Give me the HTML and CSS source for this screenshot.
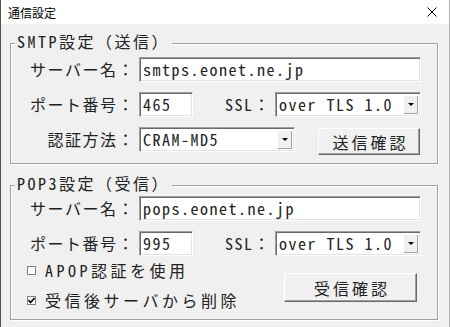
FILE: index.html
```html
<!DOCTYPE html>
<html lang="ja">
<head>
  <meta charset="UTF-8">
  <title>通信設定</title>
  <link rel="stylesheet" href="styles.css">
</head>
<body>

<div class="window">
  <div class="titlebar">
    <span class="title">通信設定</span>
    <svg class="close" width="10" height="10" viewBox="0 0 10 10">
      <path d="M0.5 0.5 L9.5 9.5 M9.5 0.5 L0.5 9.5" stroke="#000" stroke-width="1"/>
    </svg>
  </div>

  <div class="content">
    <div class="group smtp">
      <div class="group-title">SMTP設定（送信）</div>
      <div class="row">
        <span class="label">サーバー名：</span>
        <div class="field wide">smtps.eonet.ne.jp</div>
      </div>
      <div class="row">
        <span class="label">ポート番号：</span>
        <div class="field port">465</div>
        <span class="label ssl">SSL：</span>
        <div class="field combo ssl-combo"><span>over TLS 1.0</span><span class="drop"></span></div>
      </div>
      <div class="row">
        <span class="label">認証方法：</span>
        <div class="field combo auth-combo"><span>CRAM-MD5</span><span class="drop"></span></div>
        <button class="btn send-btn">送信確認</button>
      </div>
    </div>

    <div class="group pop">
      <div class="group-title">POP3設定（受信）</div>
      <div class="row">
        <span class="label">サーバー名：</span>
        <div class="field wide">pops.eonet.ne.jp</div>
      </div>
      <div class="row">
        <span class="label">ポート番号：</span>
        <div class="field port">995</div>
        <span class="label ssl">SSL：</span>
        <div class="field combo ssl-combo"><span>over TLS 1.0</span><span class="drop"></span></div>
      </div>
      <div class="bottom">
        <div class="checks">
          <div class="check-row">
            <span class="box"></span>
            <span>APOP認証を使用</span>
          </div>
          <div class="check-row">
            <span class="box">
              <svg width="7" height="7" viewBox="0 0 7 7">
                <path d="M0.5 3 L2.5 5.5 L6.5 1" stroke="#000" stroke-width="1.6" fill="none"/>
              </svg>
            </span>
            <span>受信後サーバから削除</span>
          </div>
        </div>
        <button class="btn recv-btn">受信確認</button>
      </div>
    </div>
  </div>
</div>

</body>
</html>
```

FILE: styles.css
```css
body {
  margin: 0;
  background: #f0f0f0;
  font-family: "Noto Sans Mono CJK JP", "Noto Sans CJK JP", monospace;
  font-size: 16px;
  letter-spacing: 1.5px;
  color: #222;
}
.window {
  width: 450px;
  height: 327px;
  box-sizing: border-box;
  background: #f0f0f0;
  border-left: 1px solid #5e4d40;
  border-right: 1px solid #b4b4b4;
  overflow: hidden;
}
.titlebar {
  height: 24px;
  background: #fff;
  display: flex;
  align-items: center;
  justify-content: space-between;
  padding: 0 12px 0 7px;
}
.title {
  font-family: "Noto Sans CJK JP", sans-serif;
  font-size: 12px;
  letter-spacing: 0;
  color: #000;
}
.content {
  padding: 19px 0 0 9px;
}
.group {
  position: relative;
  width: 428px;
  box-sizing: border-box;
  border: 1px solid #a0a0a0;
  box-shadow: inset 1px 1px 0 #fff, 1px 1px 0 #fff;
  display: flex;
  flex-direction: column;
  gap: 10px;
}
.group-title {
  position: absolute;
  top: -13px;
  left: 4px;
  padding: 0 2px;
  line-height: 20px;
  letter-spacing: 2.5px;
  background: #f0f0f0;
}
.smtp {
  padding: 13px 0 8px 0;
}
.pop {
  margin-top: 21px;
  padding: 10px 0 9px 0;
}
.row {
  display: flex;
  align-items: flex-start;
  min-height: 25px;
}
.label {
  width: 124px;
  margin-right: 4px;
  text-align: right;
  line-height: 25px;
  white-space: nowrap;
}
.label.ssl {
  width: 78px;
}
.field {
  height: 25px;
  box-sizing: border-box;
  background: #fff;
  border: 1px solid;
  border-color: #a0a0a0 #fff #fff #a0a0a0;
  box-shadow: inset 1px 1px 0 #696969, inset -1px -1px 0 #e3e3e3;
  padding-left: 3px;
  line-height: 23px;
  white-space: nowrap;
}
.wide { width: 282px; }
.port { width: 54px; }
.ssl-combo { width: 146px; }
.auth-combo { width: 156px; }
.combo {
  display: flex;
  justify-content: space-between;
}
.drop {
  width: 15px;
  height: 19px;
  margin: 2px 2px 0 0;
  box-sizing: border-box;
  background: #f0f0f0;
  box-shadow: inset 1px 1px 0 #fff, inset -1px -1px 0 #a0a0a0;
  display: flex;
  align-items: center;
  justify-content: center;
}
.drop::after {
  content: "";
  border-left: 3px solid transparent;
  border-right: 3px solid transparent;
  border-top: 3px solid #000;
}
.btn {
  font: inherit;
  letter-spacing: 3px;
  color: #222;
  background: #f0f0f0;
  border: 1px solid;
  border-color: #fff #696969 #696969 #fff;
  box-shadow: inset -1px -1px 0 #a0a0a0;
  padding: 0 0 0 3px;
}
.send-btn {
  width: 102px;
  height: 27px;
  margin: 1px 0 0 23px;
}
.bottom {
  display: flex;
  justify-content: space-between;
  margin-top: -6px;
  height: 50px;
}
.checks {
  display: flex;
  flex-direction: column;
  gap: 10px;
  padding-left: 16px;
  letter-spacing: 3.5px;
}
.check-row {
  display: flex;
  align-items: center;
  height: 20px;
}
.box {
  width: 9px;
  height: 9px;
  box-sizing: border-box;
  border: 1px solid #808080;
  background: #fff;
  margin-right: 9px;
  display: flex;
  align-items: center;
  justify-content: center;
}
.recv-btn {
  width: 133px;
  height: 29px;
  margin: 13px 20px 0 0;
}
```
